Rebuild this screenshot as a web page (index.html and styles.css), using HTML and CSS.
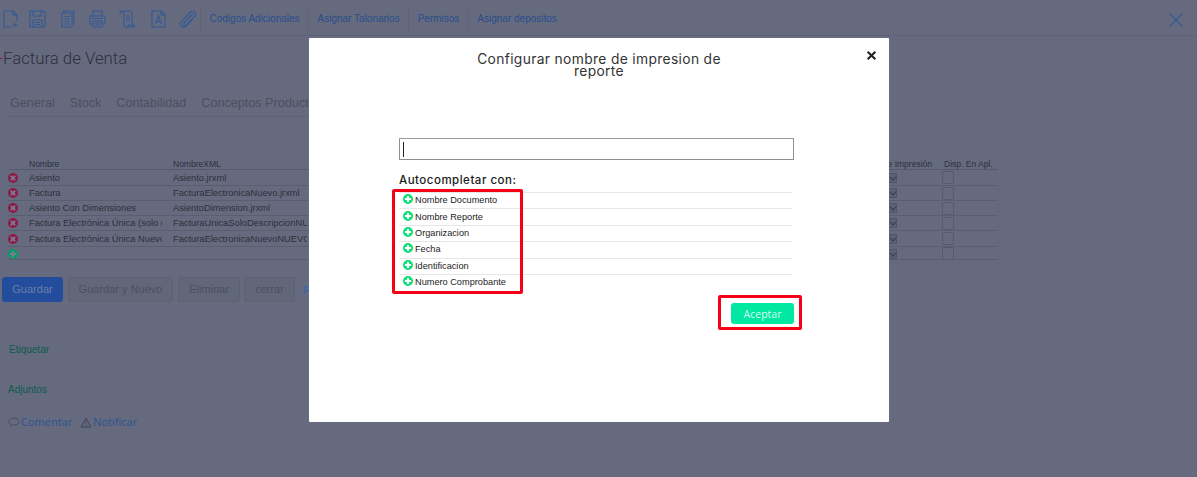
FILE: index.html
```html
<!DOCTYPE html>
<html lang="es">
<head>
<meta charset="utf-8">
<title>Factura de Venta</title>
<link rel="stylesheet" href="styles.css">
</head>
<body>
<div class="page">
  <header class="toolbar">
    <div class="tools">
      <svg class="ic" viewBox="0 0 17 18"><path d="M1 1h9l4 4v6M10 1v4h4M9 17H1V1"/><path d="M12 13v4M10 15h4.500"/></svg>
      <svg class="ic" viewBox="0 0 17 18"><path d="M1 1h13l2 2v14H1zM4 1v5h8V1M4 17v-7h9v7M6 12.500h5M6 14.500h5"/></svg>
      <svg class="ic" viewBox="0 0 17 18"><path d="M4 3V1h10v13h-2M2 3h10v14H2zM4.500 6.500h5M4.500 9h5M4.500 11.500h5M4.500 14h5"/></svg>
      <svg class="ic" viewBox="0 0 17 18"><path d="M4 6V1h9v5M4 14H1V6h15v8h-3M4 11h9v6H4zM3 8.500h11M6 13h5M6 15h5"/></svg>
      <svg class="ic" viewBox="0 0 17 18"><path d="M1 1h11a2 2 0 0 1 2 2v12M1 1a2 2 0 0 1 2 2v1M4 1a2 2 0 0 1 2 2v12a2 2 0 0 0 2 2h7a2 2 0 0 0 2-2h-6a2 2 0 0 1-3 2M8 6h4M8 8.500h4M8 11h4"/></svg>
      <svg class="ic" viewBox="0 0 17 18"><path d="M2 1h9l4 4v12H2zM11 1v4h4M5.500 14l3-8 3 8M6.500 11.500h4"/></svg>
      <svg class="ic" viewBox="0 0 17 18"><path d="M14 3.500 5 13c-1.500 2 1 3.500 2.500 2L16 6c2-3-2-6.500-5-3.500L2 12c-2.500 3 2 7 5 4l6-6"/></svg>
    </div>
    <nav class="actions">
      <a class="action">Codigos Adicionales</a>
      <a class="action">Asignar Talonarios</a>
      <a class="action">Permisos</a>
      <a class="action">Asignar depositos</a>
    </nav>
    <svg class="close-page" viewBox="0 0 14 14"><path d="M1 1l12 12M13 1 1 13"/></svg>
  </header>

  <main class="content">
    <h1 class="title"><span class="req"></span>Factura de Venta</h1>
    <div class="tabs">
      <span>General</span><span>Stock</span><span>Contabilidad</span><span>Conceptos Productos</span>
    </div>

    <div class="grid">
      <div class="g-row g-head">
        <span></span><span>Nombre</span><span>NombreXML</span><span class="c-imp">Nombre de Impresión</span><span>Disp. En Apl.</span>
      </div>
      <div class="g-row tall"><i class="del"></i><span class="cut">Asiento</span><span class="cut">Asiento.jrxml</span><b class="sel"></b><b class="chk"></b></div>
      <div class="g-row"><i class="del"></i><span class="cut">Factura</span><span class="cut">FacturaElectronicaNuevo.jrxml</span><b class="sel"></b><b class="chk"></b></div>
      <div class="g-row"><i class="del"></i><span class="cut">Asiento Con Dimensiones</span><span class="cut">AsientoDimension.jrxml</span><b class="sel"></b><b class="chk"></b></div>
      <div class="g-row"><i class="del"></i><span class="cut">Factura Electrónica Única (solo descripción)</span><span class="cut">FacturaUnicaSoloDescripcionNUEVO.jrxml</span><b class="sel"></b><b class="chk"></b></div>
      <div class="g-row tall"><i class="del"></i><span class="cut">Factura Electrónica Única Nuevo</span><span class="cut">FacturaElectronicaNuevoNUEVO.jrxml</span><b class="sel"></b><b class="chk"></b></div>
      <div class="g-row short"><i class="add"></i><span></span><span></span><b class="sel"></b><b class="chk"></b></div>
    </div>

    <div class="buttons">
      <button class="btn primary">Guardar</button>
      <button class="btn">Guardar y Nuevo</button>
      <button class="btn">Eliminar</button>
      <button class="btn">cerrar</button>
      <a class="plink">Previsualizar</a>
    </div>

    <p class="green etq">Etiquetar</p>
    <p class="green adj">Adjuntos</p>
    <div class="social">
      <svg class="s-ic" viewBox="0 0 12 11"><path d="M6 1c3 0 5 1.500 5 3.500S9 8 6 8L4 8 2.500 9.500 3 7.500C1.500 7 1 5.800 1 4.500 1 2.500 3 1 6 1z"/></svg>
      <a class="s-link">Comentar</a>
      <svg class="s-ic warn" viewBox="0 0 12 11"><path d="M6 1l5 9H1zM6 4v3.500M6 8.300v1"/></svg>
      <a class="s-link">Notificar</a>
    </div>
  </main>
</div>

<section class="modal">
  <button class="modal-x" aria-label="Cerrar"><svg viewBox="0 0 10 10"><path d="M1.500 1.500l7 7M8.500 1.500l-7 7"/></svg></button>
  <h2 class="modal-title">Configurar nombre de impresion de<br>reporte</h2>
  <div class="field"><span class="caret"></span></div>
  <h3 class="auto">Autocompletar con:</h3>
  <ul class="opts">
    <li><i class="plus"></i>Nombre Documento</li>
    <li><i class="plus"></i>Nombre Reporte</li>
    <li><i class="plus"></i>Organizacion</li>
    <li><i class="plus"></i>Fecha</li>
    <li><i class="plus"></i>Identificacion</li>
    <li><i class="plus"></i>Numero Comprobante</li>
  </ul>
  <div class="modal-foot"><button class="accept">Aceptar</button></div>
  <div class="mark mark-list"></div>
  <div class="mark mark-btn"></div>
</section>
</body>
</html>
```
FILE: styles.css
```css
* { box-sizing: border-box; }
html, body { margin: 0; padding: 0; }
body {
  width: 1197px;
  height: 477px;
  overflow: hidden;
  background: #666a7e;
  font-family: "Liberation Sans", Arial, sans-serif;
  position: relative;
}
.page { width: 1197px; height: 477px; }

.toolbar {
  height: 36px;
  display: flex;
  align-items: center;
  border-bottom: 1px solid #5f6376;
  padding-left: 3px;
  position: relative;
}
.tools { display: flex; width: 197px; }
.ic {
  width: 17px;
  height: 18px;
  fill: none;
  stroke: #2f5a96;
  stroke-width: 1.1;
  flex: none;
  margin: 2px 12px 0 0;
}
.ic:nth-child(1) { margin-right: 9px; }
.ic:nth-child(2) { margin-right: 14px; }
.ic:nth-child(5) { margin-right: 15px; }
.actions { display: flex; height: 24px; align-items: center; margin-top: 2px; }
.action {
  font-size: 10px;
  color: #264f8c;
  padding: 0 8.500px;
  line-height: 24px;
  border-left: 1px solid #5f6376;
}
.close-page {
  position: absolute;
  right: 14px;
  top: 13px;
  width: 14px;
  height: 14px;
  fill: none;
  stroke: #2f5a96;
  stroke-width: 1.300;
}

.content { padding-left: 3px; }
.title {
  margin: 0;
  padding-top: 12px;
  font: 300 16.800px/21px Roboto, sans-serif;
  color: #2c2f3c;
  display: flex;
  align-items: center;
}
.req { width: 3px; height: 1px; background: #8a1f48; margin-left: -3px; }
.tabs {
  display: flex;
  gap: 15px;
  margin: 26px 0 0 5px;
  padding-left: 2px;
  width: 312px;
  height: 22px;
  font-size: 12.600px;
  line-height: 17px;
  color: #4b4f60;
  white-space: nowrap;
  overflow: hidden;
  border-bottom: 1px solid #5f6376;
}
.grid {
  margin: 42px 0 0 5px;
  width: 990px;
  font-size: 9.300px;
  color: #2c2f3c;
}
.g-row {
  display: grid;
  grid-template-columns: 21px 144px 136px 635px 54px;
  align-items: center;
  border-bottom: 1px solid #5a5e71;
  height: 15px;
}
.g-row.g-head { height: 11px; font-size: 8.500px; align-items: start; line-height: 11px; border-bottom-color: #565a6c; }
.g-row.tall { height: 16px; }
.g-row.short { height: 13px; }
.c-imp { justify-self: end; padding-right: 12px; white-space: nowrap; }
.g-head span:last-child { white-space: nowrap; }
.cut { white-space: nowrap; overflow: hidden; margin-right: 11px; }
.cut + .cut { margin-right: 2px; }
.del, .add {
  width: 10px;
  height: 10px;
  border-radius: 50%;
  display: block;
  position: relative;
}
.del { background: #8e1a49; }
.add { background: #0b9a67; }
.del::before, .del::after, .add::before, .add::after {
  content: "";
  position: absolute;
  left: 2px;
  top: 4px;
  width: 6px;
  height: 2px;
  background: #7a7d8f;
}
.del::before { transform: rotate(45deg); }
.del::after { transform: rotate(-45deg); }
.add::after { transform: rotate(90deg); }
.sel {
  justify-self: end;
  margin-right: 47px;
  width: 9px;
  height: 10px;
  border: 1px solid #50546a;
  background: #5c6075;
  position: relative;
}
.sel::after {
  content: "";
  position: absolute;
  left: 1px;
  top: 0;
  width: 5px;
  height: 5px;
  border-right: 1px solid #33364a;
  border-bottom: 1px solid #33364a;
  transform: rotate(45deg) scale(.8);
}
.chk {
  width: 12px;
  height: 13px;
  border: 1px solid #565a6e;
  border-radius: 1px;
  margin-left: -2px;
}

.buttons { display: flex; gap: 5px; align-items: center; margin: 17px 0 0 -1px; }
.btn {
  font: 11px/1 "Liberation Sans", Arial, sans-serif;
  height: 25px;
  padding: 0;
  background: #626679;
  color: #4b4f62;
  border: 1px solid #5c6073;
  border-radius: 3px;
  flex: none;
}
.primary { background: #234c9c; border-color: #234c9c; color: #6a7fa8; width: 61px; }
.btn:nth-child(2) { width: 105px; }
.btn:nth-child(3) { width: 62px; }
.btn:nth-child(4) { width: 51px; margin-left: -1px; }
.plink { font-size: 11px; color: #2e68b5; margin-left: 3px; }

.green { margin: 0; font-size: 10px; line-height: 12px; color: #0e5c4c; }
.etq { margin: 42px 0 0 6px; }
.adj { margin: 28px 0 0 5px; }
.social {
  margin: 19px 0 0 5px;
  display: flex;
  align-items: center;
  font: 11px/14px "Open Sans", sans-serif;
  color: #2e5391;
}
.s-ic { width: 12px; height: 11px; fill: none; stroke: #4c5068; stroke-width: 1; flex: none; margin-right: 1px; }
.warn { margin-left: 8px; stroke: #3f4258; }

.modal {
  position: absolute;
  left: 309px;
  top: 38px;
  width: 580px;
  height: 384px;
  background: #fff;
  box-shadow: 0 0 1px #8a8ea0;
  border-radius: 1px;
  padding: 15px 96px 0 90px;
}
.modal-x {
  position: absolute;
  right: 12px;
  top: 12px;
  width: 11px;
  height: 11px;
  padding: 0;
  border: 0;
  background: none;
}
.modal-x svg { display: block; fill: none; stroke: #222; stroke-width: 1.900; }
.modal-title {
  margin: 0 -6px 0 0;
  font: 400 13.800px/12px Inter, "Open Sans", sans-serif;
  letter-spacing: .35px;
  color: #333;
  text-align: center;
  height: 85px;
}
.field {
  width: 395px;
  height: 22px;
  border: 1px solid #8f8f8f;
  border-top-color: #9a9a9a;
  border-radius: 1px;
  padding: 3px 3px;
}
.caret { display: block; width: 1px; height: 15px; background: #222; }
.auto {
  margin: 13px 0 0;
  font: 500 11.500px/14px Inter, "Open Sans", sans-serif;
  letter-spacing: .5px;
  color: #1a1a1a;
  height: 18px;
}
.opts { list-style: none; margin: 1px 0 0; padding: 0; width: 393px; }
.opts li {
  height: 16.400px;
  border-top: 1px solid #e6e6e6;
  font-size: 9.200px;
  line-height: 15px;
  color: #222;
  padding-left: 4px;
  display: flex;
  align-items: center;
  white-space: nowrap;
}
.plus {
  width: 10px;
  height: 10px;
  border-radius: 50%;
  background: #10e07a;
  margin: -3px 2px 0 0;
  position: relative;
  flex: none;
}
.plus::before, .plus::after {
  content: "";
  position: absolute;
  left: 2px;
  top: 4px;
  width: 6px;
  height: 2px;
  background: #fff;
}
.plus::after { transform: rotate(90deg); }
.modal-foot { display: flex; justify-content: flex-end; width: 395px; margin-top: 13px; }
.accept {
  width: 63px;
  height: 21px;
  border: 0;
  border-radius: 3px;
  background: #00e8a2;
  color: #d6fff0;
  font: 10.500px/1 "Open Sans", sans-serif;
  padding: 0;
}
.mark { position: absolute; border: 3px solid #f50014; border-radius: 2px; }
.mark-list { left: 83px; top: 151px; width: 131px; height: 105px; }
.mark-btn { left: 409px; top: 257px; width: 84px; height: 35px; }
```
